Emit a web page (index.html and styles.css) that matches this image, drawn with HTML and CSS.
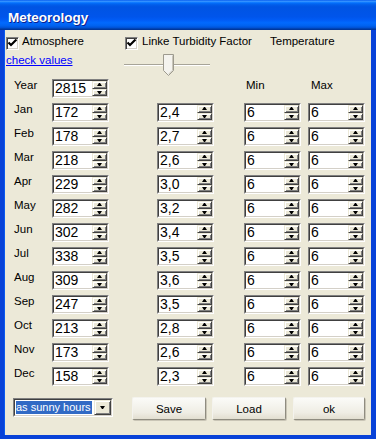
FILE: index.html
```html
<!DOCTYPE html>
<html lang="en">
<head>
    <meta charset="utf-8">
    <title>Meteorology</title>
    <link rel="stylesheet" href="styles.css">
</head>
<body>
    <div class="window">
        <div class="titlebar">Meteorology</div>
        <div class="client">
            <div class="opts">
                <label class="opt c1"><span class="check"><svg width="11" height="11" viewBox="0 0 11 11"><polyline points="1.5,4.5 4,7 9.5,1.5" fill="none" stroke="#000" stroke-width="2.2"/></svg></span>Atmosphere</label>
                <label class="opt c2"><span class="check"><svg width="11" height="11" viewBox="0 0 11 11"><polyline points="1.5,4.5 4,7 9.5,1.5" fill="none" stroke="#000" stroke-width="2.2"/></svg></span>Linke Turbidity Factor</label>
                <span class="opt">Temperature</span>
            </div>
            <div class="row2">
                <div class="c1"><a href="#" class="link">check values</a></div>
                <div class="slider">
                    <div class="groove"></div>
                    <svg class="thumb" width="11" height="22" viewBox="0 0 11 22">
                        <path d="M0.5 0.5 H10.5 V16.5 L5.5 21.5 L0.5 16.5 Z" fill="#f4f3ee" stroke="#9d9a8e"/>
                        <path d="M9.5 1.5 V16.2 L5.5 20.2" fill="none" stroke="#c9c6ba"/>
                    </svg>
                </div>
            </div>

            <div class="grid">
                <span class="lbl">Year</span>
                <div class="spin col-a"><div class="spin-in"><span class="val">2815</span><span class="ud"><i class="up"></i><i class="dn"></i></span></div></div>
                <span class="hdr col-c">Min</span>
                <span class="hdr col-d pad3">Max</span>

                <span class="lbl">Jan</span>
                <div class="spin col-a"><div class="spin-in"><span class="val">172</span><span class="ud"><i class="up"></i><i class="dn"></i></span></div></div>
                <div class="spin col-b"><div class="spin-in"><span class="val">2,4</span><span class="ud"><i class="up"></i><i class="dn"></i></span></div></div>
                <div class="spin col-c"><div class="spin-in"><span class="val">6</span><span class="ud"><i class="up"></i><i class="dn"></i></span></div></div>
                <div class="spin col-d"><div class="spin-in"><span class="val">6</span><span class="ud"><i class="up"></i><i class="dn"></i></span></div></div>

                <span class="lbl">Feb</span>
                <div class="spin col-a"><div class="spin-in"><span class="val">178</span><span class="ud"><i class="up"></i><i class="dn"></i></span></div></div>
                <div class="spin col-b"><div class="spin-in"><span class="val">2,7</span><span class="ud"><i class="up"></i><i class="dn"></i></span></div></div>
                <div class="spin col-c"><div class="spin-in"><span class="val">6</span><span class="ud"><i class="up"></i><i class="dn"></i></span></div></div>
                <div class="spin col-d"><div class="spin-in"><span class="val">6</span><span class="ud"><i class="up"></i><i class="dn"></i></span></div></div>

                <span class="lbl">Mar</span>
                <div class="spin col-a"><div class="spin-in"><span class="val">218</span><span class="ud"><i class="up"></i><i class="dn"></i></span></div></div>
                <div class="spin col-b"><div class="spin-in"><span class="val">2,6</span><span class="ud"><i class="up"></i><i class="dn"></i></span></div></div>
                <div class="spin col-c"><div class="spin-in"><span class="val">6</span><span class="ud"><i class="up"></i><i class="dn"></i></span></div></div>
                <div class="spin col-d"><div class="spin-in"><span class="val">6</span><span class="ud"><i class="up"></i><i class="dn"></i></span></div></div>

                <span class="lbl">Apr</span>
                <div class="spin col-a"><div class="spin-in"><span class="val">229</span><span class="ud"><i class="up"></i><i class="dn"></i></span></div></div>
                <div class="spin col-b"><div class="spin-in"><span class="val">3,0</span><span class="ud"><i class="up"></i><i class="dn"></i></span></div></div>
                <div class="spin col-c"><div class="spin-in"><span class="val">6</span><span class="ud"><i class="up"></i><i class="dn"></i></span></div></div>
                <div class="spin col-d"><div class="spin-in"><span class="val">6</span><span class="ud"><i class="up"></i><i class="dn"></i></span></div></div>

                <span class="lbl">May</span>
                <div class="spin col-a"><div class="spin-in"><span class="val">282</span><span class="ud"><i class="up"></i><i class="dn"></i></span></div></div>
                <div class="spin col-b"><div class="spin-in"><span class="val">3,2</span><span class="ud"><i class="up"></i><i class="dn"></i></span></div></div>
                <div class="spin col-c"><div class="spin-in"><span class="val">6</span><span class="ud"><i class="up"></i><i class="dn"></i></span></div></div>
                <div class="spin col-d"><div class="spin-in"><span class="val">6</span><span class="ud"><i class="up"></i><i class="dn"></i></span></div></div>

                <span class="lbl">Jun</span>
                <div class="spin col-a"><div class="spin-in"><span class="val">302</span><span class="ud"><i class="up"></i><i class="dn"></i></span></div></div>
                <div class="spin col-b"><div class="spin-in"><span class="val">3,4</span><span class="ud"><i class="up"></i><i class="dn"></i></span></div></div>
                <div class="spin col-c"><div class="spin-in"><span class="val">6</span><span class="ud"><i class="up"></i><i class="dn"></i></span></div></div>
                <div class="spin col-d"><div class="spin-in"><span class="val">6</span><span class="ud"><i class="up"></i><i class="dn"></i></span></div></div>

                <span class="lbl">Jul</span>
                <div class="spin col-a"><div class="spin-in"><span class="val">338</span><span class="ud"><i class="up"></i><i class="dn"></i></span></div></div>
                <div class="spin col-b"><div class="spin-in"><span class="val">3,5</span><span class="ud"><i class="up"></i><i class="dn"></i></span></div></div>
                <div class="spin col-c"><div class="spin-in"><span class="val">6</span><span class="ud"><i class="up"></i><i class="dn"></i></span></div></div>
                <div class="spin col-d"><div class="spin-in"><span class="val">6</span><span class="ud"><i class="up"></i><i class="dn"></i></span></div></div>

                <span class="lbl">Aug</span>
                <div class="spin col-a"><div class="spin-in"><span class="val">309</span><span class="ud"><i class="up"></i><i class="dn"></i></span></div></div>
                <div class="spin col-b"><div class="spin-in"><span class="val">3,6</span><span class="ud"><i class="up"></i><i class="dn"></i></span></div></div>
                <div class="spin col-c"><div class="spin-in"><span class="val">6</span><span class="ud"><i class="up"></i><i class="dn"></i></span></div></div>
                <div class="spin col-d"><div class="spin-in"><span class="val">6</span><span class="ud"><i class="up"></i><i class="dn"></i></span></div></div>

                <span class="lbl">Sep</span>
                <div class="spin col-a"><div class="spin-in"><span class="val">247</span><span class="ud"><i class="up"></i><i class="dn"></i></span></div></div>
                <div class="spin col-b"><div class="spin-in"><span class="val">3,5</span><span class="ud"><i class="up"></i><i class="dn"></i></span></div></div>
                <div class="spin col-c"><div class="spin-in"><span class="val">6</span><span class="ud"><i class="up"></i><i class="dn"></i></span></div></div>
                <div class="spin col-d"><div class="spin-in"><span class="val">6</span><span class="ud"><i class="up"></i><i class="dn"></i></span></div></div>

                <span class="lbl">Oct</span>
                <div class="spin col-a"><div class="spin-in"><span class="val">213</span><span class="ud"><i class="up"></i><i class="dn"></i></span></div></div>
                <div class="spin col-b"><div class="spin-in"><span class="val">2,8</span><span class="ud"><i class="up"></i><i class="dn"></i></span></div></div>
                <div class="spin col-c"><div class="spin-in"><span class="val">6</span><span class="ud"><i class="up"></i><i class="dn"></i></span></div></div>
                <div class="spin col-d"><div class="spin-in"><span class="val">6</span><span class="ud"><i class="up"></i><i class="dn"></i></span></div></div>

                <span class="lbl">Nov</span>
                <div class="spin col-a"><div class="spin-in"><span class="val">173</span><span class="ud"><i class="up"></i><i class="dn"></i></span></div></div>
                <div class="spin col-b"><div class="spin-in"><span class="val">2,6</span><span class="ud"><i class="up"></i><i class="dn"></i></span></div></div>
                <div class="spin col-c"><div class="spin-in"><span class="val">6</span><span class="ud"><i class="up"></i><i class="dn"></i></span></div></div>
                <div class="spin col-d"><div class="spin-in"><span class="val">6</span><span class="ud"><i class="up"></i><i class="dn"></i></span></div></div>

                <span class="lbl">Dec</span>
                <div class="spin col-a"><div class="spin-in"><span class="val">158</span><span class="ud"><i class="up"></i><i class="dn"></i></span></div></div>
                <div class="spin col-b"><div class="spin-in"><span class="val">2,3</span><span class="ud"><i class="up"></i><i class="dn"></i></span></div></div>
                <div class="spin col-c"><div class="spin-in"><span class="val">6</span><span class="ud"><i class="up"></i><i class="dn"></i></span></div></div>
                <div class="spin col-d"><div class="spin-in"><span class="val">6</span><span class="ud"><i class="up"></i><i class="dn"></i></span></div></div>
            </div>

            <div class="footer">
                <div class="combo"><div class="combo-in"><span class="sel">as sunny hours</span><span class="drop"><i class="dn"></i></span></div></div>
                <button class="btn save">Save</button>
                <button class="btn">Load</button>
                <button class="btn ok">ok</button>
            </div>
        </div>
    </div>
</body>
</html>
```

FILE: styles.css
```css
body {
    margin: 0;
    font-family: "Liberation Sans", Arial, sans-serif;
    font-size: 11.5px;
    color: #000;
}

.window {
    width: 376px;
    height: 439px;
    display: flex;
    flex-direction: column;
    background: #0842d8;
}

.titlebar {
    height: 30px;
    box-sizing: border-box;
    padding: 6px 0 0 8px;
    line-height: 24px;
    font-size: 13.5px;
    font-weight: bold;
    color: #fff;
    text-shadow: 1px 1px #0a1f8f;
    background: linear-gradient(to bottom, #0058ee 0%, #3a93ff 4%, #288eff 6%, #127dff 8%, #036ffc 10%, #0262ee 14%, #0057e5 20%, #0054e3 24%, #0055eb 56%, #005bf5 66%, #026afe 76%, #0062ef 86%, #0052d6 92%, #0040ab 96%, #003092 100%);
}

.client {
    flex: 1;
    margin: 0 5px 4px 4px;
    background: #ece9d8;
    border-left: 1px solid #0a5af0;
    box-sizing: border-box;
}

/* top options */

.opts {
    display: flex;
    height: 15px;
    margin-top: 5px;
    padding-left: 1px;
    line-height: 13px;
}

.opt {
    display: flex;
    align-items: flex-start;
}

.c1 {
    width: 119px;
}

.c2 {
    width: 145px;
}

.check {
    width: 13px;
    height: 13px;
    box-sizing: border-box;
    margin: 2px 3px 0 0;
    background: #fff;
    border: 1px solid;
    border-color: #808080 #fff #fff #808080;
    box-shadow: inset 1px 1px #404040, inset -1px -1px #d4d0c8;
    display: flex;
    align-items: center;
    justify-content: center;
}

.c2 .check {
    margin-right: 4px;
}

.row2 {
    display: flex;
    height: 29px;
    padding-left: 1px;
}

.link {
    display: block;
    margin-top: 4px;
    line-height: 13px;
    color: #0000ff;
}

.slider {
    position: relative;
    width: 86px;
    margin-left: -1px;
}

.groove {
    margin-top: 14px;
    height: 1px;
    background: #a7a498;
    border-bottom: 1px solid #fff;
}

.thumb {
    position: absolute;
    left: 39px;
    top: 4px;
}

/* month table */

.grid {
    display: grid;
    grid-template-columns: 38px 57px 48px 57px 30px 57px 7px 57px;
    grid-auto-rows: 19px;
    row-gap: 5px;
    padding-left: 9px;
}

.lbl,
.hdr {
    grid-column: 1;
    line-height: 13px;
}

.hdr {
    padding-left: 2px;
}

.pad3 {
    padding-left: 3px;
}

.col-a { grid-column: 2; }
.col-b { grid-column: 4; }
.col-c { grid-column: 6; }
.col-d { grid-column: 8; }

.spin,
.combo {
    border: 1px solid;
    border-color: #808080 #fff #fff #808080;
    box-sizing: border-box;
}

.spin-in,
.combo-in {
    height: 100%;
    display: flex;
    border: 1px solid;
    border-color: #404040 #d4d0c8 #d4d0c8 #404040;
    box-sizing: border-box;
    background: #fff;
}

.val {
    flex: 1;
    padding-left: 1px;
    font-family: "Liberation Sans Narrow", "Liberation Sans", sans-serif;
    font-size: 14px;
    line-height: 15px;
}

.ud {
    width: 15px;
    display: flex;
    flex-direction: column;
}

.ud i,
.drop {
    flex: 1;
    display: flex;
    align-items: center;
    justify-content: center;
    background: #ece9d8;
    border: 1px solid;
    border-color: #ece9d8 #404040 #404040 #ece9d8;
    box-shadow: inset 1px 1px #fff, inset -1px -1px #808080;
}

.ud i::after,
.drop i::after {
    content: "";
    width: 1px;
    border-left: 2px solid transparent;
    border-right: 2px solid transparent;
}

.ud .up::after {
    border-bottom: 3px solid #000;
}

.ud .dn::after,
.drop i::after {
    border-top: 3px solid #000;
}

/* footer */

.footer {
    display: flex;
    align-items: flex-start;
    margin-top: 11px;
    padding-left: 8px;
}

.combo {
    width: 100px;
    height: 19px;
    margin-top: 1px;
}

.sel {
    align-self: flex-start;
    margin: 1px 0 0 1px;
    padding: 0 1px 0 0;
    line-height: 13px;
    font-size: 11px;
    background: #316ac5;
    color: #fff;
}

.drop {
    flex: none;
    width: 15px;
    margin-left: auto;
}

.drop i {
    display: flex;
}

.btn {
    width: 74px;
    height: 23px;
    margin-left: 6px;
    padding: 0;
    font-family: "Liberation Sans", Arial, sans-serif;
    font-size: 11.5px;
    color: #000;
    border: 1px solid;
    border-color: #f4f3ee #8f8c80 #8f8c80 #f4f3ee;
    border-radius: 2px;
    background: linear-gradient(to bottom, #fbfbf8, #efede4 70%, #e2ded0);
    box-shadow: 1px 1px #c9c5b6;
}

.save {
    margin-left: 19px;
}

.ok {
    width: 72px;
    margin-left: 7px;
}
```
